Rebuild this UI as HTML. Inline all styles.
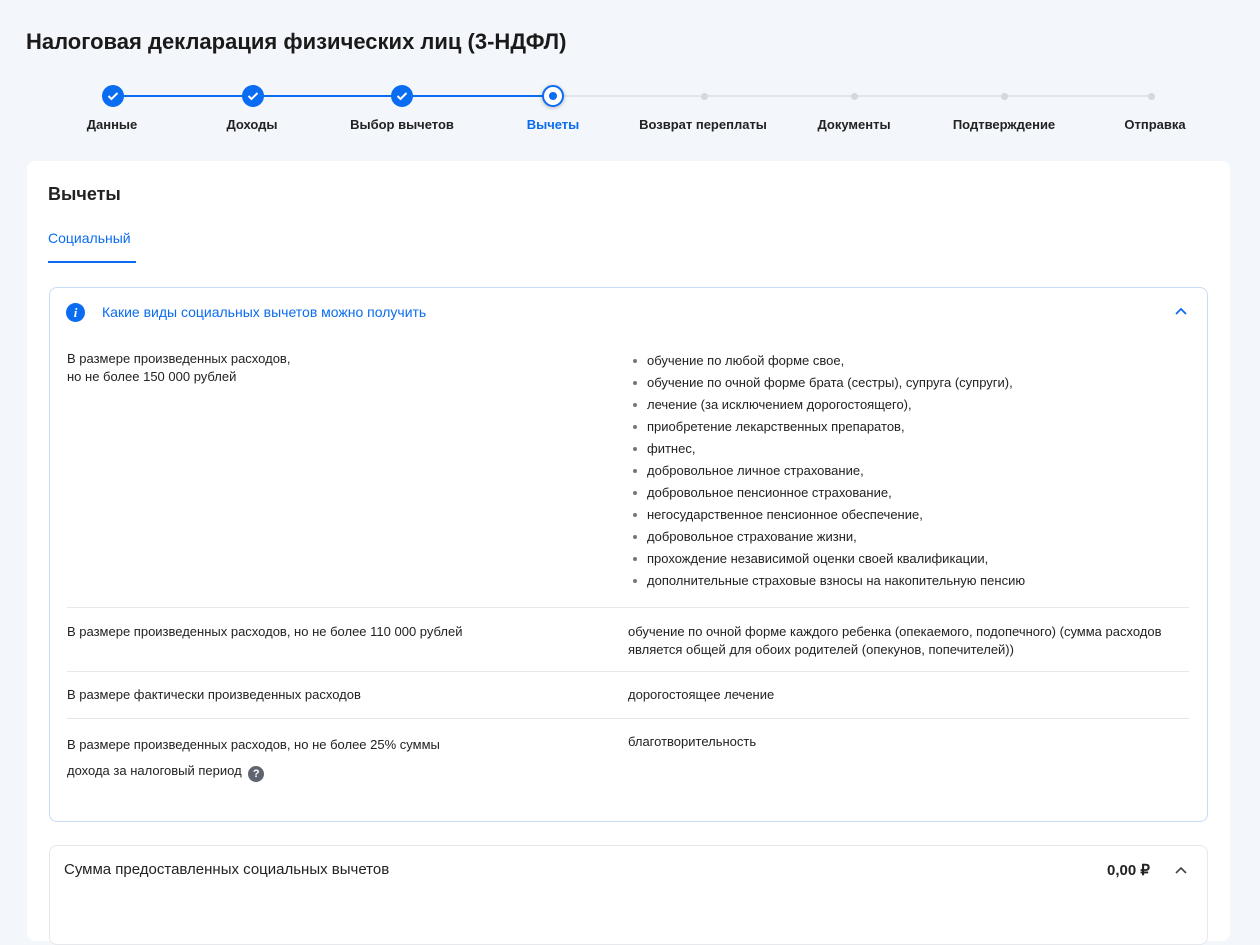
<!DOCTYPE html>
<html><head><meta charset="utf-8"><style>
*{margin:0;padding:0;box-sizing:border-box}
body{width:1260px;height:918px;overflow:hidden;background:#f3f6fb;font-family:"Liberation Sans",Arial,sans-serif;color:#1f1f1f;position:relative}
.abs{position:absolute}
h1{position:absolute;left:26px;top:29px;font-size:22px;font-weight:bold;color:#1a1a1a}
.line{position:absolute;height:2px;top:95px}
.c{position:absolute;width:22px;height:22px;border-radius:50%;background:#0a6cf0;top:85px}
.c svg{position:absolute;left:5px;top:6px}
.g{position:absolute;width:7px;height:7px;border-radius:50%;background:#d4d7dd;top:93px}
.lb{position:absolute;top:117px;font-size:13px;font-weight:bold;transform:translateX(-50%);white-space:nowrap;color:#222}
.card{position:absolute;left:27px;top:161px;width:1203px;height:780px;background:#fff;border-radius:8px}
.box{position:absolute;left:49px;width:1159px;border:1px solid #c9dcf7;border-radius:8px;background:#fff}
.t{position:absolute;font-size:13px;line-height:18px;color:#222}
.li{position:absolute;left:647px;font-size:13px;color:#222}
.li:before{content:"";position:absolute;left:-14px;top:6px;width:4px;height:4px;border-radius:50%;background:#777}
.sep{position:absolute;left:67px;width:1122px;height:1px;background:#e6e8ec}
</style></head><body>
<h1>Налоговая декларация физических лиц (3-НДФЛ)</h1>
<div class="line" style="left:113px;width:440px;background:#0a6cf0"></div>
<div class="line" style="left:553px;width:598px;background:#e2e5ea"></div>
<div class="c" style="left:102px"><svg width="12" height="10"><path d="M1.5 5l3 3 6-6" stroke="#fff" stroke-width="2" fill="none"/></svg></div>
<div class="c" style="left:242px"><svg width="12" height="10"><path d="M1.5 5l3 3 6-6" stroke="#fff" stroke-width="2" fill="none"/></svg></div>
<div class="c" style="left:391px"><svg width="12" height="10"><path d="M1.5 5l3 3 6-6" stroke="#fff" stroke-width="2" fill="none"/></svg></div>
<div class="c" style="left:542px;background:#fff;border:2px solid #0a6cf0;box-shadow:0 1px 4px rgba(0,0,0,.25)"><div style="position:absolute;left:5px;top:5px;width:8px;height:8px;border-radius:50%;background:#0a6cf0"></div></div>
<div class="g" style="left:701px"></div><div class="g" style="left:851px"></div><div class="g" style="left:1001px"></div><div class="g" style="left:1148px"></div>
<div class="lb" style="left:112px">Данные</div>
<div class="lb" style="left:252px">Доходы</div>
<div class="lb" style="left:402px">Выбор вычетов</div>
<div class="lb" style="left:553px;color:#0a6cf0">Вычеты</div>
<div class="lb" style="left:703px">Возврат переплаты</div>
<div class="lb" style="left:854px">Документы</div>
<div class="lb" style="left:1004px">Подтверждение</div>
<div class="lb" style="left:1155px">Отправка</div>
<div class="card"></div>
<div class="abs" style="left:48px;top:184px;font-size:18px;font-weight:bold;color:#222">Вычеты</div>
<div class="abs" style="left:48px;top:230px;font-size:14px;color:#0a6cf0">Социальный</div>
<div class="abs" style="left:48px;top:261px;width:88px;height:2px;background:#0a6cf0"></div>
<div class="box" style="top:287px;height:535px"></div>
<div class="abs" style="left:66px;top:303px;width:19px;height:19px;border-radius:50%;background:#0a6cf0;color:#fff;font:italic bold 13px 'Liberation Serif',serif;text-align:center;line-height:19px">i</div>
<div class="abs" style="left:102px;top:304px;font-size:14px;color:#0a6cf0">Какие виды социальных вычетов можно получить</div>
<svg class="abs" style="left:1175px;top:307px" width="12" height="8"><path d="M1 7l5-5 5 5" stroke="#0a6cf0" stroke-width="1.8" fill="none"/></svg>
<div class="t" style="left:67px;top:350px">В размере произведенных расходов,<br>но не более 150 000 рублей</div>
<div class="li" style="top:353px">обучение по любой форме свое,</div>
<div class="li" style="top:375px">обучение по очной форме брата (сестры), супруга (супруги),</div>
<div class="li" style="top:397px">лечение (за исключением дорогостоящего),</div>
<div class="li" style="top:419px">приобретение лекарственных препаратов,</div>
<div class="li" style="top:441px">фитнес,</div>
<div class="li" style="top:463px">добровольное личное страхование,</div>
<div class="li" style="top:485px">добровольное пенсионное страхование,</div>
<div class="li" style="top:507px">негосударственное пенсионное обеспечение,</div>
<div class="li" style="top:529px">добровольное страхование жизни,</div>
<div class="li" style="top:551px">прохождение независимой оценки своей квалификации,</div>
<div class="li" style="top:573px">дополнительные страховые взносы на накопительную пенсию</div>
<div class="sep" style="top:607px"></div>
<div class="t" style="left:67px;top:623px">В размере произведенных расходов, но не более 110 000 рублей</div>
<div class="t" style="left:628px;top:623px">обучение по очной форме каждого ребенка (опекаемого, подопечного) (сумма расходов<br>является общей для обоих родителей (опекунов, попечителей))</div>
<div class="sep" style="top:671px"></div>
<div class="t" style="left:67px;top:686px">В размере фактически произведенных расходов</div>
<div class="t" style="left:628px;top:686px">дорогостоящее лечение</div>
<div class="sep" style="top:718px"></div>
<div class="t" style="left:67px;top:732px;line-height:26px">В размере произведенных расходов, но не более 25% суммы<br>дохода за налоговый период <span style="display:inline-block;width:16px;height:16px;border-radius:50%;background:#5f6570;color:#fff;font-size:11px;font-weight:bold;text-align:center;line-height:16px;vertical-align:-2px;margin-left:3px">?</span></div>
<div class="t" style="left:628px;top:733px">благотворительность</div>
<div class="box" style="top:845px;height:100px;border-color:#e6e8ec"></div>
<div class="abs" style="left:64px;top:861px;font-size:15px;color:#222">Сумма предоставленных социальных вычетов</div>
<div class="abs" style="left:1107px;top:861px;font-size:15px;font-weight:bold;color:#222">0,00 ₽</div>
<svg class="abs" style="left:1175px;top:866px" width="12" height="8"><path d="M1 7l5-5 5 5" stroke="#444" stroke-width="1.6" fill="none"/></svg>
</body></html>
